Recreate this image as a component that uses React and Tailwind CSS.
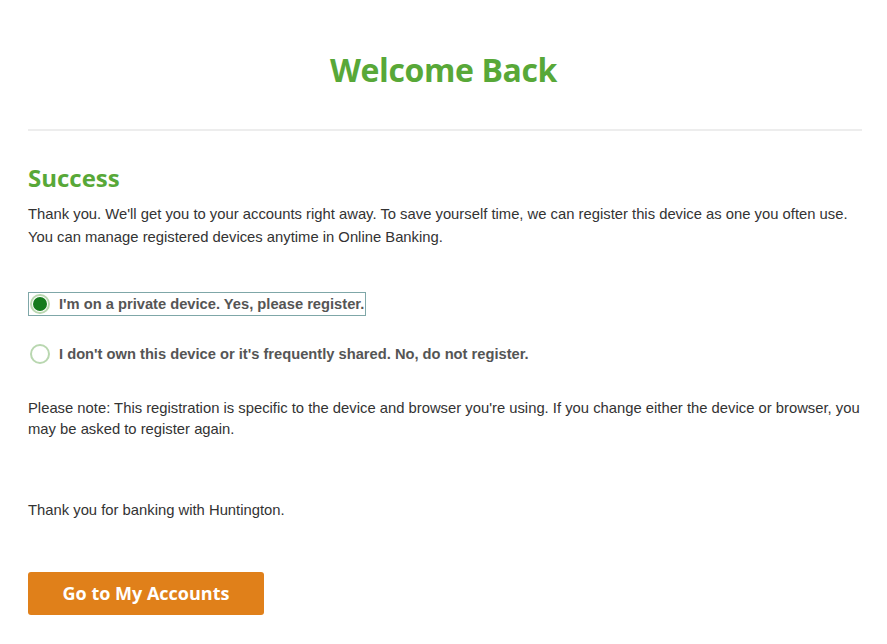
import React, { useState } from "react";

const WelcomeBack = () => {
  const [choice, setChoice] = useState("private");

  return (
    <div className="bg-white min-h-screen font-['Liberation_Sans',Arial,sans-serif]">
      <div className="pl-[28px] pr-[20px] pt-[48px]">
        {/* Page title */}
        <h1 className="text-center text-[32px] leading-[44px] font-bold text-[#58a838] font-['Open_Sans',sans-serif] tracking-[-0.4px] m-0 pr-[8px]">
          Welcome Back
        </h1>

        <div className="mt-[37px] border-t-2 border-[#ededed] mr-[5px]" />

        {/* Success message */}
        <h2 className="mt-[31px] text-[24px] leading-[32px] font-bold text-[#58a838] font-['Open_Sans',sans-serif] m-0">
          Success
        </h2>
        <p className="mt-[9px] text-[14.8px] leading-[23px] text-[#333] m-0">
          Thank you. We'll get you to your accounts right away. To save yourself time, we can register this device as one you often use.
          <br />
          You can manage registered devices anytime in Online Banking.
        </p>

        {/* Registration choice */}
        <div className="mt-[43px] flex flex-col gap-[26px]">
          <label
            onClick={() => setChoice("private")}
            className={`inline-flex items-center gap-[9px] self-start px-[1px] py-[1px] cursor-pointer border ${
              choice === "private" ? "border-[#7fa7a8]" : "border-transparent"
            }`}
          >
            <span className="w-[20px] h-[20px] rounded-full border-2 border-[#b9d7b0] flex items-center justify-center bg-white">
              {choice === "private" && <span className="w-[14px] h-[14px] rounded-full bg-[#157a1d]" />}
            </span>
            <span className="text-[14.7px] leading-[20px] font-bold text-[#555]">I'm on a private device. Yes, please register.</span>
          </label>

          <label
            onClick={() => setChoice("shared")}
            className={`inline-flex items-center gap-[9px] self-start px-[1px] py-[1px] cursor-pointer border ${
              choice === "shared" ? "border-[#7fa7a8]" : "border-transparent"
            }`}
          >
            <span className="w-[20px] h-[20px] rounded-full border-2 border-[#b9d7b0] flex items-center justify-center bg-white">
              {choice === "shared" && <span className="w-[14px] h-[14px] rounded-full bg-[#157a1d]" />}
            </span>
            <span className="text-[14.7px] leading-[20px] font-bold text-[#555]">
              I don't own this device or it's frequently shared. No, do not register.
            </span>
          </label>
        </div>

        <p className="mt-[32px] text-[14.8px] leading-[21px] text-[#333] m-0">
          Please note: This registration is specific to the device and browser you're using. If you change either the device or browser, you may be asked to register again.
        </p>

        <p className="mt-[59px] text-[14.8px] leading-[22px] text-[#333] m-0">Thank you for banking with Huntington.</p>

        <button className="mt-[51px] w-[236px] h-[43px] bg-[#e0801a] rounded-[3px] text-white text-[18px] font-bold font-['Open_Sans',sans-serif] border-none cursor-pointer">
          Go to My Accounts
        </button>
      </div>
    </div>
  );
};

export default WelcomeBack;
